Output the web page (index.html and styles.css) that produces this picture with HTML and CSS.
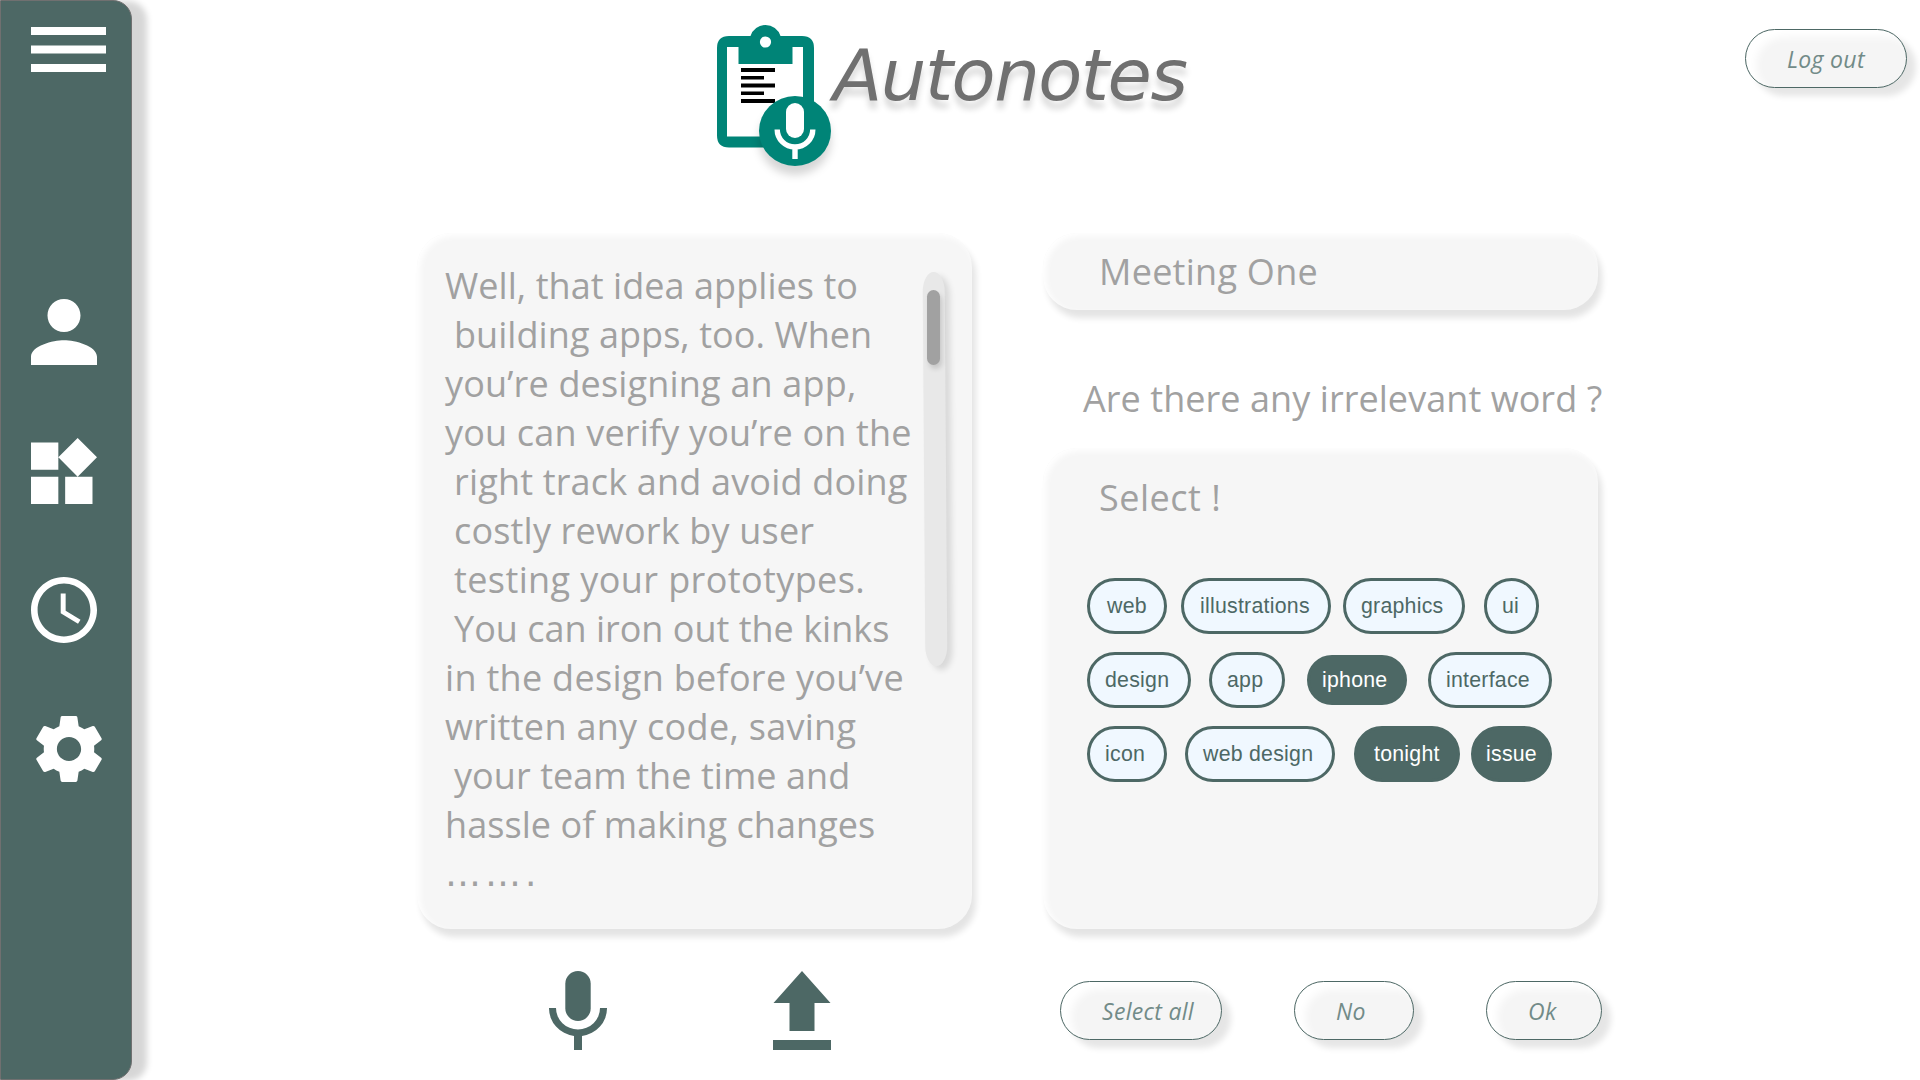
FILE: index.html
```html
<!DOCTYPE html>
<html lang="en">
<head>
<meta charset="utf-8">
<title>Autonotes</title>
<link rel="stylesheet" href="styles.css">
</head>
<body>
<nav class="sidebar">
  <svg class="nav-menu" width="75" height="45" viewBox="0 0 75 45"><path d="M0 0h75v8H0zM0 18.500h75v8H0zM0 37h75v8H0z"/></svg>
  <svg class="nav-icon" viewBox="4 4 16 16"><path d="M12 12c2.210 0 4-1.790 4-4s-1.790-4-4-4-4 1.790-4 4 1.790 4 4 4zm0 2c-2.670 0-8 1.340-8 4v2h16v-2c0-2.660-5.330-4-8-4z"/></svg>
  <svg class="nav-icon" viewBox="3 1.690 19.320 19.310"><path d="M13 13v8h8v-8h-8zM3 21h8v-8H3v8zM3 3v8h8V3H3zm13.660-1.310L11 7.340 16.660 13l5.660-5.660-5.660-5.650z"/></svg>
  <svg class="nav-icon" viewBox="2 2 20 20"><path d="M11.990 2C6.470 2 2 6.480 2 12s4.470 10 9.990 10C17.520 22 22 17.520 22 12S17.520 2 11.990 2zM12 20c-4.420 0-8-3.580-8-8s3.580-8 8-8 8 3.580 8 8-3.580 8-8 8zm.5-13H11v6l5.250 3.150.75-1.230-4.500-2.670z"/></svg>
  <svg class="nav-icon nav-gear" viewBox="2.200 2 19.600 20" preserveAspectRatio="none"><path d="M19.430 12.980c.04-.32.07-.64.07-.98s-.03-.66-.07-.98l2.110-1.650c.19-.15.24-.42.12-.64l-2-3.460c-.12-.22-.39-.3-.61-.22l-2.490 1c-.52-.4-1.080-.73-1.690-.98l-.38-2.650C14.460 2.180 14.250 2 14 2h-4c-.25 0-.46.18-.49.42l-.38 2.650c-.61.25-1.170.59-1.690.98l-2.490-1c-.23-.09-.49 0-.61.22l-2 3.460c-.13.22-.07.49.12.64l2.110 1.650c-.04.32-.07.65-.07.98s.03.66.07.98l-2.110 1.650c-.19.15-.24.42-.12.64l2 3.460c.12.22.39.3.61.22l2.490-1c.52.4 1.080.73 1.690.98l.38 2.650c.03.24.24.42.49.42h4c.25 0 .46-.18.49-.42l.38-2.650c.61-.25 1.170-.59 1.690-.98l2.490 1c.23.09.49 0 .61-.22l2-3.460c.12-.22.07-.49-.12-.64l-2.110-1.650zM12 15.600c-1.980 0-3.600-1.620-3.600-3.600s1.620-3.600 3.600-3.600 3.600 1.620 3.600 3.600-1.620 3.600-3.600 3.600z"/></svg>
</nav>
<main class="main">
  <header class="header">
    <svg class="logo" width="120" height="155" viewBox="715 20 120 155">
      <path fill="#008477" d="M729 36H750.500A15.700 15.700 0 0 1 780.500 36H802Q814 36 814 48V135.500Q814 147.500 802 147.500H729Q717 147.500 717 135.500V48Q717 36 729 36z"/>
      <path fill="#fff" d="M727 47h11.500v17h54V47H803v89.500H727z"/>
      <circle cx="765.500" cy="42" r="5.600" fill="#fff"/>
      <path d="M741 68h34v4h-34zM741 76h23v3.600h-23zM741 83.600h34v4h-34zM741 91.500h23v3.600h-23zM741 99h34v4h-34z"/>
      <ellipse class="logo-disc" cx="795" cy="131" rx="36" ry="35" fill="#008477"/>
      <rect x="786" y="103" width="18" height="35" rx="9" fill="#fff"/>
      <path d="M777.200 129.500a17.800 17.500 0 0 0 35.600 0M795 147v12" fill="none" stroke="#fff" stroke-width="5.400"/>
    </svg>
    <h1 class="brand">Autonotes</h1>
    <button class="btn logout">Log out</button>
  </header>
  <div class="content">
    <section class="left">
      <div class="card transcript">
        <div class="lines">
          <p class="l1">Well, that idea applies to</p>
          <p class="in l2">building apps, too. When</p>
          <p class="l3">you’re designing an app,</p>
          <p class="l4">you can verify you’re on the</p>
          <p class="in l5">right track and avoid doing</p>
          <p class="in l6">costly rework by user</p>
          <p class="in l7">testing your prototypes.</p>
          <p class="in l8">You can iron out the kinks</p>
          <p class="l9">in the design before you’ve</p>
          <p class="l10">written any code, saving</p>
          <p class="in l11">your team the time and</p>
          <p class="l12">hassle of making changes</p>
          <p class="dots">…….</p>
        </div>
        <div class="track"><div class="thumb"></div></div>
      </div>
      <div class="tools">
        <svg width="58" height="79" viewBox="0 0 58 79"><rect x="16.300" width="25.400" height="50" rx="12.700"/><path d="M0 37h7a22 21.500 0 0 0 44 0h7a29 28 0 0 1-25 28v14h-8V65A29 28 0 0 1 0 37z"/></svg>
        <svg width="58" height="79" viewBox="0 0 58 79"><path d="M29 0L57.500 32H41.500V60H16.500V32H.5zM0 69h58v10H0z"/></svg>
      </div>
    </section>
    <section class="right">
      <div class="card title">Meeting One</div>
      <p class="question">Are there any irrelevant word ?</p>
      <div class="card picker">
        <p class="select">Select !</p>
        <div class="chips">
          <span class="chip c-web">web</span><span class="chip c-ill">illustrations</span><span class="chip c-gra">graphics</span><span class="chip c-ui">ui</span>
        </div>
        <div class="chips">
          <span class="chip c-des">design</span><span class="chip c-app">app</span><span class="chip on c-iph">iphone</span><span class="chip c-int">interface</span>
        </div>
        <div class="chips">
          <span class="chip c-ico">icon</span><span class="chip c-wde">web design</span><span class="chip on c-ton">tonight</span><span class="chip on c-iss">issue</span>
        </div>
      </div>
      <div class="actions">
        <button class="btn all">Select all</button>
        <button class="btn no">No</button>
        <button class="btn ok">Ok</button>
      </div>
    </section>
  </div>
</main>
</body>
</html>
```
FILE: styles.css
```css
* { box-sizing: border-box; margin: 0; padding: 0; }
body {
  width: 1920px;
  height: 1080px;
  display: flex;
  overflow: hidden;
  background: #fff;
  font-family: "Open Sans", "Noto Sans", sans-serif;
  color: #a1a1a1;
}
svg { display: block; flex: none; }

.sidebar {
  width: 132px;
  height: 1080px;
  padding: 26px 0 0 30px;
  background: #4d6865;
  border: 1px solid #707070;
  border-radius: 0 19px 19px 0;
  box-shadow: 15px 1px 6px rgba(0, 0, 0, .16);
  fill: #fff;
}
.nav-menu { margin-bottom: 227px; }
.nav-icon { width: 66px; height: 66px; margin-bottom: 73px; }
.nav-gear { margin-left: 5px; margin-bottom: 0; }

.main { flex: 1; }
.header { height: 233px; display: flex; align-items: flex-start; padding: 20px 13px 0 583px; }
.logo { overflow: visible; }
.logo-disc { filter: drop-shadow(0 9px 4px rgba(0, 0, 0, .16)); }
.brand {
  margin: 13px 0 0 -2px;
  font: italic 400 72px/84px "DejaVu Sans", sans-serif;
  letter-spacing: -1.5px;
  color: #707070;
  text-shadow: 0 8px 6px rgba(0, 0, 0, .16);
}
.logout { margin: 9px 0 0 auto; }

.btn {
  height: 59px;
  border: 1px solid #4d6865;
  border-radius: 30px;
  background: #f5f5f5;
  box-shadow: inset 10px 7px 8px #fff, 9px 8px 6px rgba(0, 0, 0, .1);
  font: italic 400 23px/30px "Open Sans", sans-serif;
  letter-spacing: .3px;
  text-align: left;
  color: #728b88;
}
.logout, .all { width: 162px; padding-left: 41px; }
.no { width: 120px; padding-left: 41px; }
.ok { width: 116px; padding-left: 41px; }

.content { display: flex; gap: 71px; padding-left: 285px; }
.card {
  background: #f6f6f6;
  border-radius: 34px;
  box-shadow: inset 3px 3px 6px #fff, 4px 8px 6px rgba(0, 0, 0, .11);
}
.left { width: 555px; }
.transcript { height: 696px; display: flex; padding: 28px 0 0 28px; }
.lines { width: 479px; font-size: 36px; line-height: 49px; white-space: nowrap; }
.in { padding-left: 9px; }
.l1, .l2, .l11, .l12 { letter-spacing: .06px; }
.l3, .l4, .l5, .l6 { letter-spacing: .18px; }
.l7 { letter-spacing: .4px; }
.l9, .l10 { letter-spacing: .3px; }
.dots { font-family: "DejaVu Sans", sans-serif; letter-spacing: 4px; }
.track {
  width: 22px;
  height: 394px;
  margin-top: 11px;
  padding: 18px 0 0 4px;
  border-radius: 11px / 20px;
  background: #e8e8e8;
  box-shadow: 5px 4px 6px rgba(0, 0, 0, .12);
  transform: skewX(.4deg);
}
.thumb {
  width: 13px;
  height: 75px;
  border-radius: 6.5px;
  background: #a1a1a1;
  box-shadow: 2px 4px 5px rgba(0, 0, 0, .14);
  transform: skewX(-.4deg);
}
.tools { display: flex; gap: 166px; padding: 42px 0 0 132px; fill: #4d6865; }

.right { width: 560px; font-size: 36px; line-height: 49px; white-space: nowrap; }
.title { width: 555px; height: 77px; padding: 14px 0 0 56px; letter-spacing: .27px; }
.question { padding: 64px 0 0 40px; height: 138px; letter-spacing: .06px; }
.picker { width: 555px; height: 481px; padding: 25px 0 0 44px; }
.select { padding-left: 12px; margin-bottom: 56px; height: 49px; letter-spacing: .5px; }
.chips { display: flex; align-items: center; height: 56px; margin-bottom: 18px; }
.chip {
  height: 56px;
  border: 3px solid #4d6865;
  border-radius: 28px;
  background: #f0f8ff;
  font: 21.3px/50px "Liberation Sans", Arial, sans-serif;
  letter-spacing: .25px;
  color: #4d6865;
}
.on { background: #4d6865; color: #fff; }
.c-web { width: 80px; padding-left: 17px; }
.c-ill { width: 150px; padding-left: 16px; margin-left: 14px; }
.c-gra { width: 122px; padding-left: 15px; margin-left: 12px; }
.c-ui { width: 55px; padding-left: 15px; margin-left: 19px; }
.c-des { width: 104px; padding-left: 15px; }
.c-app { width: 76px; padding-left: 15px; margin-left: 18px; }
.c-iph { width: 100px; height: 50px; line-height: 44px; padding-left: 12px; margin-left: 22px; }
.c-int { width: 124px; padding-left: 15px; margin-left: 21px; }
.c-ico { width: 80px; padding-left: 15px; }
.c-wde { width: 150px; padding-left: 15px; margin-left: 18px; }
.c-ton { width: 106px; padding-left: 17px; margin-left: 19px; }
.c-iss { width: 81px; padding-left: 12px; margin-left: 11px; }
.actions { display: flex; padding: 52px 0 0 17px; }
.no { margin-left: 72px; }
.ok { margin-left: 72px; }
```
